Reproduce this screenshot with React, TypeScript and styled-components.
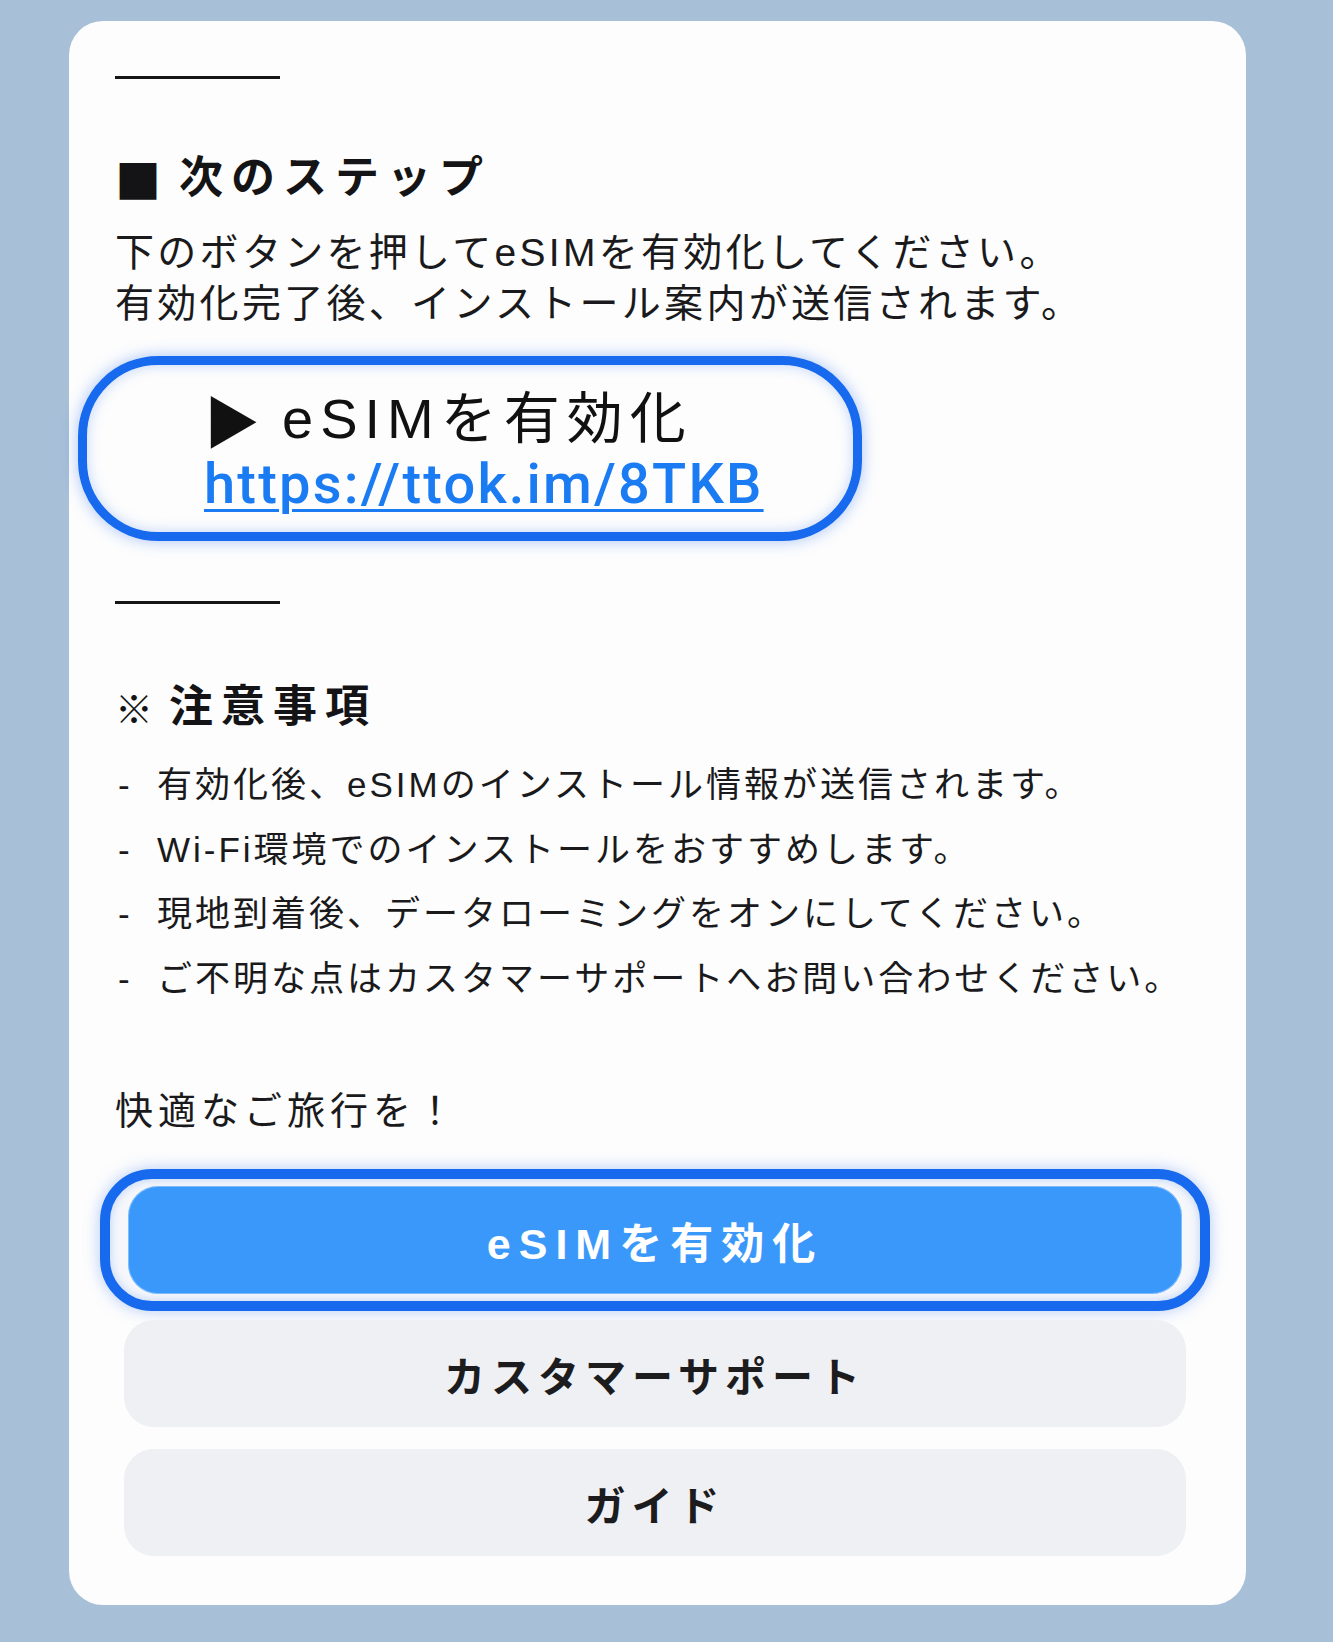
import React from 'react'
import styled, { createGlobalStyle } from 'styled-components'

const GlobalStyle = createGlobalStyle`
  html, body {
    margin: 0;
    padding: 0;
    background: #a7bfd7;
  }
  body {
    font-family: "Liberation Sans", "Noto Sans CJK JP", sans-serif;
    color: #1a1a1c;
  }
`

const Page = styled.div`
  padding: 21px 87px 37px 69px;
`

const Card = styled.div`
  background: #fdfdfd;
  border-radius: 34px;
  padding: 55px 60px 49px 46px;
  display: flex;
  flex-direction: column;
`

const Rule = styled.div<{ $gap?: number }>`
  width: 165px;
  height: 3px;
  background: #161616;
  margin-top: ${({ $gap }) => $gap ?? 0}px;
`

const SectionTitle = styled.h2<{ $gap: number }>`
  margin: ${({ $gap }) => $gap}px 0 0;
  font-size: 44px;
  line-height: 50px;
  font-weight: 700;
  letter-spacing: 8px;
  color: #141416;
  display: flex;
  align-items: center;
`

const Mark = styled.span<{ $light?: boolean }>`
  font-family: "Noto Sans CJK JP", sans-serif;
  font-weight: ${({ $light }) => ($light ? 400 : 700)};
  font-size: ${({ $light }) => ($light ? 38 : 46)}px;
  letter-spacing: 0;
  margin-right: ${({ $light }) => ($light ? 16 : 18)}px;
`

const Lead = styled.p`
  margin: 24px 0 0;
  font-size: 39px;
  line-height: 51px;
  letter-spacing: 3.3px;
`

const LinkBox = styled.div`
  margin: 27px 0 0 -37px;
  width: 784px;
  height: 185px;
  box-sizing: border-box;
  border: 9px solid #1769ee;
  border-radius: 80px;
  padding: 23px 0 0 117px;
  box-shadow: 0 0 16px rgba(40, 110, 240, 0.4), inset 0 0 14px rgba(40, 110, 240, 0.28);
  display: flex;
  flex-direction: column;
  gap: 2px;
`

const LinkTitle = styled.div`
  font-size: 56px;
  line-height: 62px;
  letter-spacing: 7px;
  color: #111;
  display: flex;
  align-items: center;
`

const Play = styled.span`
  font-family: "Noto Sans CJK JP", sans-serif;
  font-size: 56px;
  letter-spacing: 0;
  margin-right: 22px;
`

const LinkLine = styled.div`
  height: 64px;
  display: flex;
  align-items: center;
`

const ActivateLink = styled.a`
  font-family: Roboto, "Liberation Sans", sans-serif;
  font-weight: 500;
  font-size: 56px;
  line-height: 1;
  letter-spacing: 2.2px;
  color: #1a7bf2;
  text-decoration: underline;
  text-decoration-thickness: 3px;
  text-underline-offset: 6px;
`

const Notes = styled.ul`
  list-style: none;
  margin: 21px 0 0;
  padding: 0;
`

const Note = styled.li`
  display: flex;
  font-size: 35px;
  line-height: 64.5px;
  letter-spacing: 3px;
`

const Dash = styled.span`
  width: 39px;
  padding-left: 3px;
  flex: none;
`

const Farewell = styled.p`
  margin: 75px 0 0;
  font-size: 38px;
  line-height: 50px;
  letter-spacing: 5px;
`

const Actions = styled.div`
  margin: 33px 0 0 9px;
  display: flex;
  flex-direction: column;
`

const FocusRing = styled.div`
  margin: 0 -24px;
  border: 10px solid #1769ee;
  border-radius: 52px;
  padding: 7px 18px;
  background: #f5f7fb;
  box-shadow: 0 0 16px rgba(40, 110, 240, 0.35), inset 0 0 10px rgba(40, 110, 240, 0.28);
`

const Button = styled.button<{ $primary?: boolean; $gap?: number }>`
  display: block;
  width: 100%;
  height: ${({ $primary }) => ($primary ? 108 : 107)}px;
  margin-top: ${({ $gap }) => $gap ?? 0}px;
  border: none;
  border-radius: 30px;
  font-family: inherit;
  font-size: ${({ $primary }) => ($primary ? 43 : 41)}px;
  font-weight: 700;
  letter-spacing: ${({ $primary }) => ($primary ? 8 : 6)}px;
  cursor: pointer;
  background: ${({ $primary }) => ($primary ? '#3a98fb' : '#eff0f3')};
  color: ${({ $primary }) => ($primary ? '#ffffff' : '#1c1c1e')};
  box-shadow: ${({ $primary }) => ($primary ? 'inset 0 0 0 1px rgba(255,255,255,0.35)' : 'none')};
`

const notes = [
  '有効化後、eSIMのインストール情報が送信されます。',
  'Wi-Fi環境でのインストールをおすすめします。',
  '現地到着後、データローミングをオンにしてください。',
  'ご不明な点はカスタマーサポートへお問い合わせください。',
]

export default function App() {
  return (
    <Page>
      <GlobalStyle />
      <Card>
        <Rule />
        <SectionTitle $gap={74}>
          <Mark>■</Mark>次のステップ
        </SectionTitle>
        <Lead>
          下のボタンを押してeSIMを有効化してください。
          <br />
          有効化完了後、インストール案内が送信されます。
        </Lead>
        <LinkBox>
          <LinkTitle>
            <Play>▶</Play>eSIMを有効化
          </LinkTitle>
          <LinkLine>
            <ActivateLink href="#">https://ttok.im/8TKB</ActivateLink>
          </LinkLine>
        </LinkBox>

        <Rule $gap={60} />
        <SectionTitle $gap={78}>
          <Mark $light>※</Mark>注意事項
        </SectionTitle>
        <Notes>
          {notes.map((n) => (
            <Note key={n}>
              <Dash>-</Dash>
              <span>{n}</span>
            </Note>
          ))}
        </Notes>

        <Farewell>快適なご旅行を！</Farewell>

        <Actions>
          <FocusRing>
            <Button $primary>eSIMを有効化</Button>
          </FocusRing>
          <Button $gap={9}>カスタマーサポート</Button>
          <Button $gap={22}>ガイド</Button>
        </Actions>
      </Card>
    </Page>
  )
}
